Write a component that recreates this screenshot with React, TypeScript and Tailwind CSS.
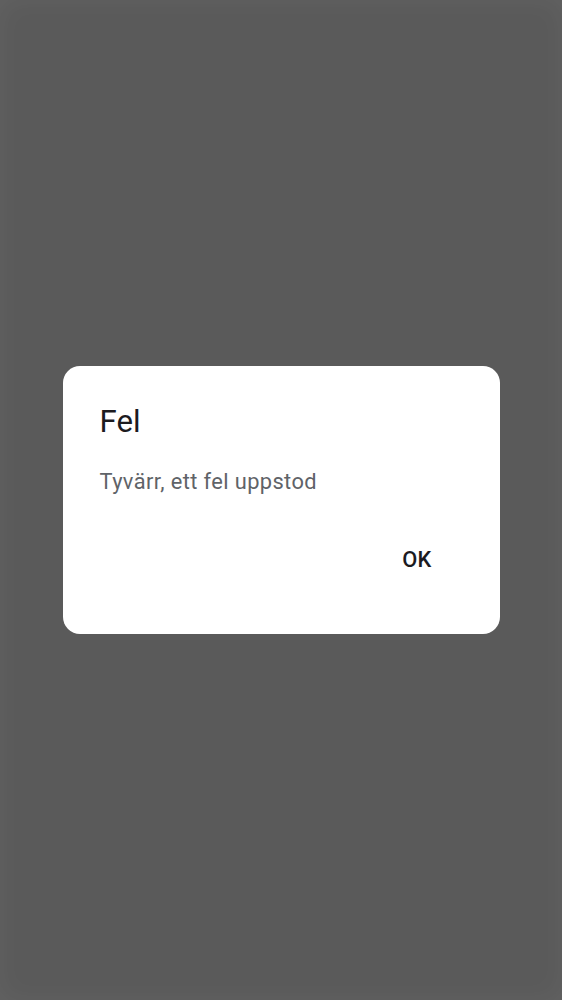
export default function App() {
  return (
    <div
      className="flex h-[1000px] w-full items-center justify-center bg-[#5a5a5a] shadow-[inset_0_0_28px_rgba(255,255,255,0.05)]"
      style={{ fontFamily: "Roboto, 'Noto Sans', sans-serif" }}
    >
      <div className="w-[437px] rounded-[17px] bg-white pb-[43px] pl-[37px] pr-[49px] pt-[37px]">
        <h2 className="text-[31.2px] font-normal leading-[38px] text-[#1c1b1f]">Fel</h2>
        <p className="mt-[25px] text-[21.84px] leading-[31.2px] tracking-[0.39px] text-[#5f6368]">
          Tyvärr, ett fel uppstod
        </p>
        <div className="mt-[32px] flex justify-end">
          <button className="h-[62px] rounded-full px-[19px] text-[21.84px] font-medium tracking-[0.2px] text-[#1c1b1f]">
            OK
          </button>
        </div>
      </div>
    </div>
  )
}
